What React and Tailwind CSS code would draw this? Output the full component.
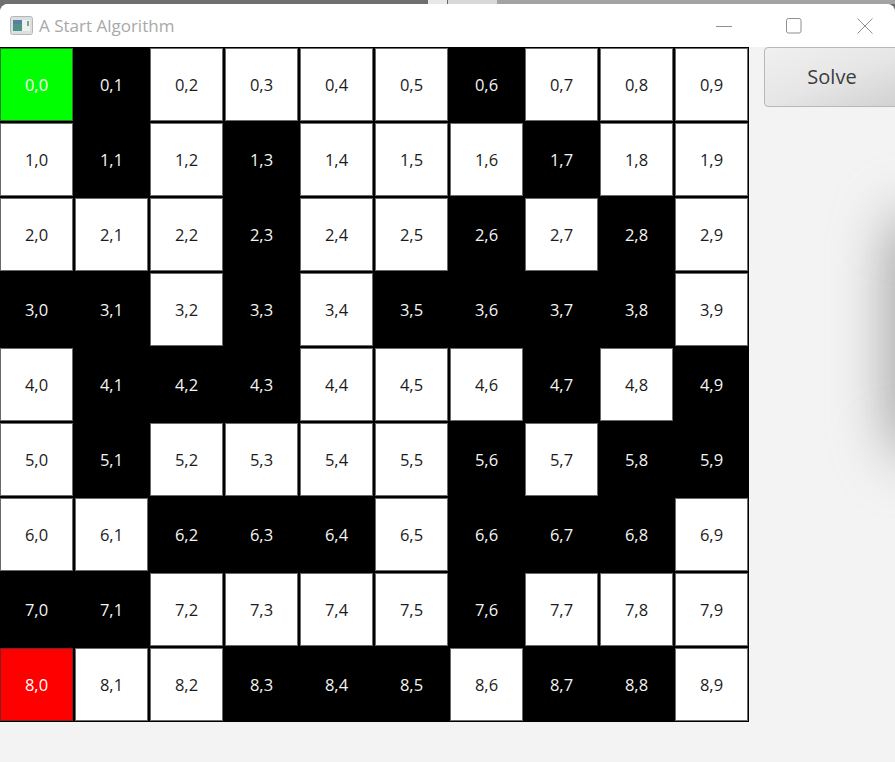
// Maze layout, 1 = wall
const WALLS = [
  [0, 1, 0, 0, 0, 0, 1, 0, 0, 0],
  [0, 1, 0, 1, 0, 0, 0, 1, 0, 0],
  [0, 0, 0, 1, 0, 0, 1, 0, 1, 0],
  [1, 1, 0, 1, 0, 1, 1, 1, 1, 0],
  [0, 1, 1, 1, 0, 0, 0, 1, 0, 1],
  [0, 1, 0, 0, 0, 0, 1, 0, 1, 1],
  [0, 0, 1, 1, 1, 0, 1, 1, 1, 0],
  [1, 1, 0, 0, 0, 0, 1, 0, 0, 0],
  [0, 0, 0, 1, 1, 1, 0, 1, 1, 0],
]

function Cell({ row, col }) {
  const start = row === 0 && col === 0
  const end = row === 8 && col === 0
  const wall = WALLS[row][col] === 1
  let tone = 'bg-white text-[#1c1c1c] border-[#6a6a6a]'
  if (start) tone = 'bg-[#00ff00] text-white border-[#1f7f1f]'
  else if (end) tone = 'bg-[#ff0000] text-white border-[#7f1f1f]'
  else if (wall) tone = 'bg-black text-[#f4f4f4] border-black'

  return (
    <div className={`flex h-[73px] w-[73px] items-center justify-center border pt-[2px] text-[16.5px] ${tone}`}>
      {row},{col}
    </div>
  )
}

function AppIcon() {
  return (
    <svg width="23" height="19" viewBox="0 0 23 19" className="mr-[6px] shrink-0">
      <rect x="0.5" y="0.5" width="22" height="18" rx="2" fill="#dcdfe0" stroke="#b4b7b9" />
      <rect x="3" y="4" width="9" height="11" fill="#4f9488" />
      <rect x="3" y="4" width="9" height="4" fill="#5a7fa0" />
      <rect x="12" y="4" width="8" height="11" fill="#eef0ef" />
      <rect x="17" y="5" width="2" height="5" fill="#7fa588" />
    </svg>
  )
}

// Windows caption buttons, thin strokes
function WindowControls() {
  return (
    <div className="ml-auto flex items-center text-[#8f8f8f]">
      <svg width="16" height="16" viewBox="0 0 16 16" className="mr-[54px]">
        <path d="M0 8.5H16" stroke="currentColor" />
      </svg>
      <svg width="16" height="16" viewBox="0 0 16 16" className="mr-[55px]">
        <rect x="0.5" y="0.5" width="14.5" height="14.5" rx="2" fill="none" stroke="currentColor" />
      </svg>
      <svg width="16" height="16" viewBox="0 0 16 16" className="mr-[22px]">
        <path d="M0.5 0.5L15.5 15.5M15.5 0.5L0.5 15.5" stroke="currentColor" />
      </svg>
    </div>
  )
}

export default function App() {
  return (
    <div className="relative h-[762px] w-[895px] overflow-hidden bg-[#6f6f6f] font-['Open_Sans',sans-serif]">
      {/* sliver of the desktop above the window */}
      <div className="flex h-[4px]">
        <div className="w-[428px] bg-[#6f6f6f]" />
        <div className="w-[19px] bg-[#e8e8e8]" />
        <div className="w-px bg-[#666666]" />
        <div className="w-[49px] bg-[#d8d8d8]" />
        <div className="flex-1 bg-[#a3a3a3]" />
      </div>

      <div className="h-[758px] overflow-hidden rounded-t-[8px] bg-[#f3f3f3]">
        {/* title bar */}
        <div className="flex h-[43px] items-center bg-white pl-[10px]">
          <AppIcon />
          <span className="text-[17px] text-[#a8a8a8]">A Start Algorithm</span>
          <WindowControls />
        </div>

        <div className="flex items-start">
          <div className="grid w-[749px] grid-cols-[repeat(10,73px)] gap-[2px] bg-black py-px pr-px">
            {WALLS.map((cols, row) =>
              cols.map((_, col) => <Cell key={`${row}-${col}`} row={row} col={col} />),
            )}
          </div>

          <button className="z-10 ml-[15px] h-[60px] w-[150px] shrink-0 rounded-[4px] border border-[#b8b8b8] bg-gradient-to-br from-[#f0f0f0] via-[#e6e6e6] to-[#cfcfcf] pr-[14px] text-[20px] text-[#3c3c3c]">
            Solve
          </button>
        </div>
      </div>

      {/* soft shadow on the right edge */}
      <div className="pointer-events-none absolute left-[895px] top-[215px] h-[240px] w-[50px] rounded-full bg-[#8c8c8c] blur-[30px]" />
    </div>
  )
}
